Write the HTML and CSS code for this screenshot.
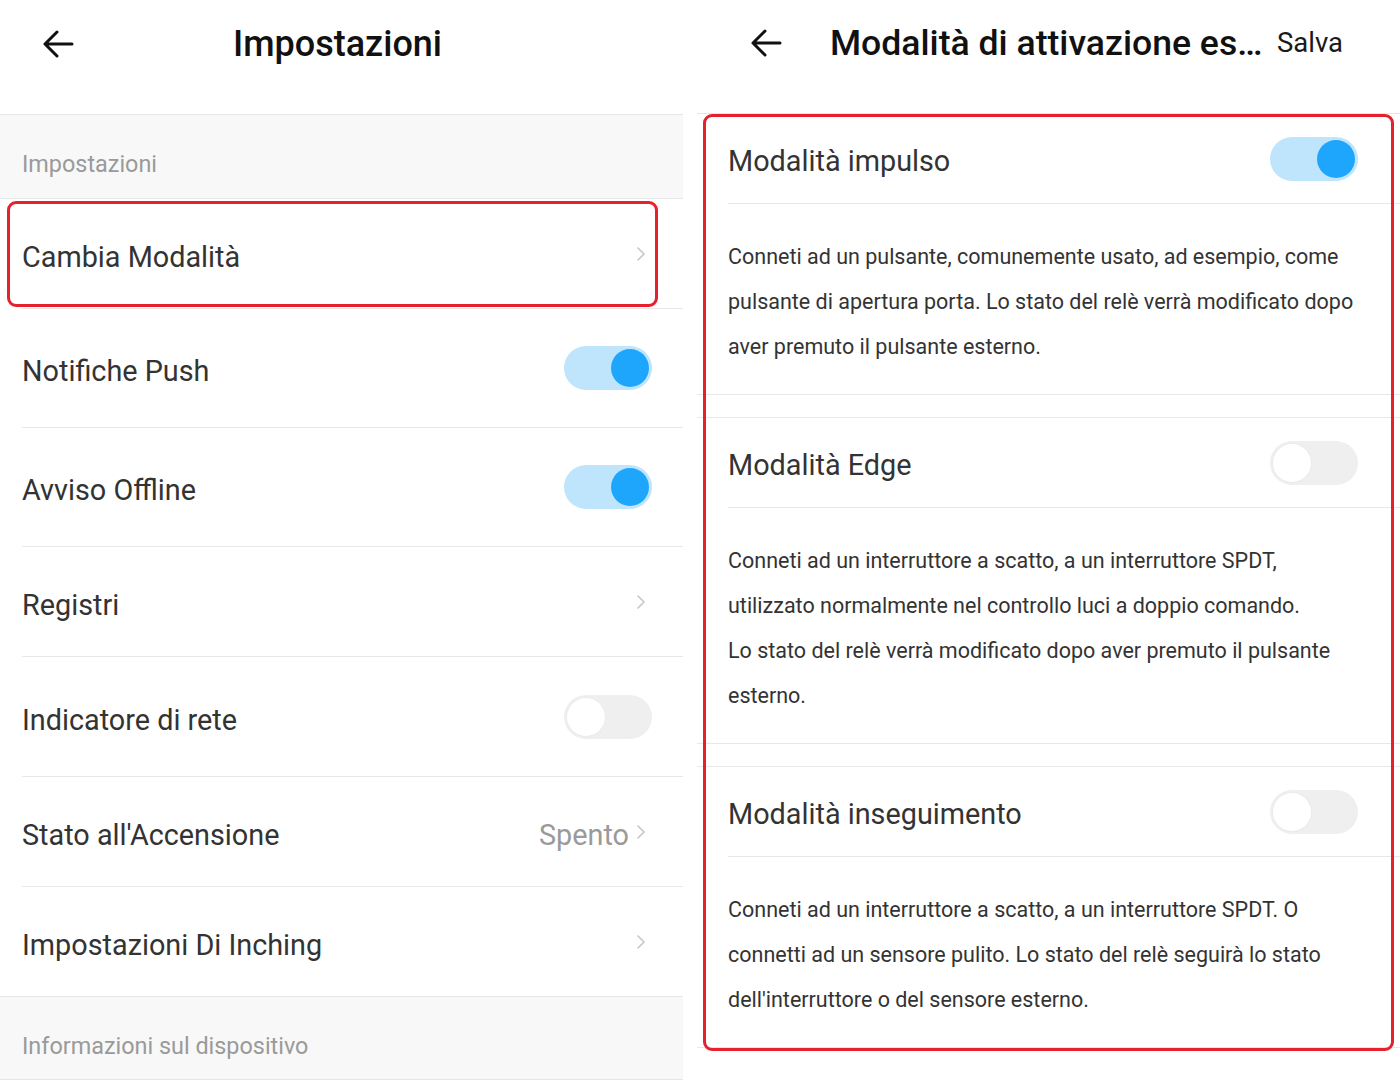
FILE: index.html
```html
<!DOCTYPE html>
<html lang="it">
<head>
<meta charset="utf-8">
<title>Impostazioni</title>
<link rel="stylesheet" href="styles.css">
</head>
<body>
<div class="screen">
  <section class="panel panel-left">
    <header class="topbar">
      <span class="back"><svg width="32" height="28" viewBox="0 0 32 28"><path d="M30 14H3M15 2L3 14L15 26" fill="none" stroke="#111" stroke-width="3" stroke-linecap="round" stroke-linejoin="round"/></svg></span>
      <h1 class="title">Impostazioni</h1>
      <span></span>
    </header>
    <div class="group-head">Impostazioni</div>
    <div class="row short highlight"><span class="label">Cambia Modalità</span><span class="chev"><svg width="10" height="16" viewBox="0 0 10 16"><path d="M2 2L8 8L2 14" fill="none" stroke="#c6c6c6" stroke-width="1.6" stroke-linecap="round" stroke-linejoin="round"/></svg></span></div>
    <div class="row tall"><span class="label">Notifiche Push</span><span class="toggle on"><span class="knob"></span></span></div>
    <div class="row tall"><span class="label">Avviso Offline</span><span class="toggle on"><span class="knob"></span></span></div>
    <div class="row short"><span class="label">Registri</span><span class="chev"><svg width="10" height="16" viewBox="0 0 10 16"><path d="M2 2L8 8L2 14" fill="none" stroke="#c6c6c6" stroke-width="1.6" stroke-linecap="round" stroke-linejoin="round"/></svg></span></div>
    <div class="row taller"><span class="label">Indicatore di rete</span><span class="toggle"><span class="knob"></span></span></div>
    <div class="row short"><span class="label">Stato all'Accensione</span><span class="value">Spento</span><span class="chev"><svg width="10" height="16" viewBox="0 0 10 16"><path d="M2 2L8 8L2 14" fill="none" stroke="#c6c6c6" stroke-width="1.6" stroke-linecap="round" stroke-linejoin="round"/></svg></span></div>
    <div class="row last"><span class="label">Impostazioni Di Inching</span><span class="chev"><svg width="10" height="16" viewBox="0 0 10 16"><path d="M2 2L8 8L2 14" fill="none" stroke="#c6c6c6" stroke-width="1.6" stroke-linecap="round" stroke-linejoin="round"/></svg></span></div>
    <div class="group-head group-bottom">Informazioni sul dispositivo</div>
  </section>

  <section class="panel panel-right">
    <header class="topbar-r">
      <span class="back-r"><svg width="32" height="28" viewBox="0 0 32 28"><path d="M30 14H3M15 2L3 14L15 26" fill="none" stroke="#111" stroke-width="3" stroke-linecap="round" stroke-linejoin="round"/></svg></span>
      <h1 class="title-r">Modalità di attivazione es…</h1>
      <span class="save">Salva</span>
    </header>
    <div class="modes">
      <div class="mode">
        <div class="mode-row"><span class="mode-label">Modalità impulso</span><span class="toggle on"><span class="knob"></span></span></div>
        <p class="mode-desc">Conneti ad un pulsante, comunemente usato, ad esempio, come pulsante di apertura porta. Lo stato del relè verrà modificato dopo aver premuto il pulsante esterno.</p>
      </div>
      <div class="mode">
        <div class="mode-row"><span class="mode-label">Modalità Edge</span><span class="toggle"><span class="knob"></span></span></div>
        <p class="mode-desc">Conneti ad un interruttore a scatto, a un interruttore SPDT, utilizzato normalmente nel controllo luci a doppio comando.<br>Lo stato del relè verrà modificato dopo aver premuto il pulsante esterno.</p>
      </div>
      <div class="mode">
        <div class="mode-row"><span class="mode-label">Modalità inseguimento</span><span class="toggle"><span class="knob"></span></span></div>
        <p class="mode-desc">Conneti ad un interruttore a scatto, a un interruttore SPDT. O connetti ad un sensore pulito. Lo stato del relè seguirà lo stato dell'interruttore o del sensore esterno.</p>
      </div>
    </div>
  </section>
</div>
</body>
</html>
```

FILE: styles.css
```css
* { box-sizing: border-box; }
html, body { margin: 0; padding: 0; background: #fff; }
body { font-family: Roboto, "Noto Sans", "Liberation Sans", sans-serif; color: #333; }

.screen { display: flex; width: 1400px; height: 1091px; overflow: hidden; }

.panel { display: flex; flex-direction: column; }
.panel-left { width: 683px; }
.panel-right { width: 703px; margin-left: 14px; }

/* left top bar */
.topbar {
  height: 115px;
  display: grid;
  grid-template-columns: 1fr auto 1fr;
  align-items: start;
  padding-top: 22px;
  border-bottom: 1px solid #e6e6e6;
}
.back { padding-left: 42px; height: 44px; display: flex; align-items: center; }
.title { margin: 0; font-size: 36px; font-weight: 500; color: #111; line-height: 44px; position: relative; left: -4px; }

.group-head {
  height: 84px;
  background: #f8f8f8;
  border-bottom: 1px solid #e6e6e6;
  padding: 34px 0 0 22px;
  font-size: 23.4px;
  line-height: 30px;
  color: #9a9a9a;
}
.group-bottom { border-top: 1px solid #e6e6e6; height: 84px; padding-top: 34px; }

.row {
  display: flex;
  align-items: center;
  margin-left: 22px;
  padding-right: 31px;
  border-bottom: 1px solid #e8e8e8;
  position: relative;
}
.short { height: 110px; }
.tall { height: 119px; }
.taller { height: 120px; }
.last { height: 109px; border-bottom: none; }
.label { flex: 1; font-size: 28.8px; color: #333; line-height: 34px; padding-top: 6px; }
.value { font-size: 28.8px; color: #9a9a9a; margin-right: 7px; padding-top: 6px; line-height: 34px; }
.chev { display: flex; align-items: center; margin-right: 6px; }

.highlight::after {
  content: "";
  position: absolute;
  top: 2px;
  left: -15px;
  right: 25px;
  bottom: 1px;
  border: 3px solid #e5212d;
  border-radius: 9px;
  pointer-events: none;
}

/* toggles */
.toggle {
  width: 88px;
  height: 44px;
  border-radius: 22px;
  background: #efefef;
  display: flex;
  align-items: center;
  padding: 0 3px;
}
.toggle .knob {
  width: 38px;
  height: 38px;
  border-radius: 50%;
  background: #fff;
  box-shadow: 0 0 0 1px #ebebeb;
}
.toggle.on { background: #bfe5fd; justify-content: flex-end; }
.toggle.on .knob { background: #1ea6fd; box-shadow: none; }

/* right top bar */
.topbar-r {
  height: 114px;
  display: flex;
  align-items: flex-start;
  padding-top: 21px;
  border-bottom: 1px solid #e6e6e6;
}
.back-r { margin-left: 53px; height: 44px; display: flex; align-items: center; width: 80px; }
.title-r { margin: 0; font-size: 35.6px; font-weight: 500; color: #111; line-height: 44px; white-space: nowrap; width: 447px; }
.save { font-size: 27.5px; color: #1a1a1a; line-height: 44px; }

.modes { position: relative; }
.modes::after {
  content: "";
  position: absolute;
  top: 0;
  left: 6px;
  right: 6px;
  bottom: -3px;
  border: 3px solid #e5212d;
  border-radius: 9px;
  pointer-events: none;
}
.mode { border-bottom: 1px solid #e8e8e8; }
.mode + .mode { margin-top: 22px; border-top: 1px solid #e8e8e8; }
.mode-row {
  height: 90px;
  margin-left: 31px;
  padding-right: 42px;
  border-bottom: 1px solid #e8e8e8;
  display: flex;
  align-items: center;
}
.mode-label { flex: 1; font-size: 28.8px; color: #333; line-height: 34px; padding-top: 4px; }
.mode-desc {
  margin: 0;
  padding: 30px 40px 25px 31px;
  font-size: 21.5px;
  line-height: 45px;
  color: #333;
}
```
